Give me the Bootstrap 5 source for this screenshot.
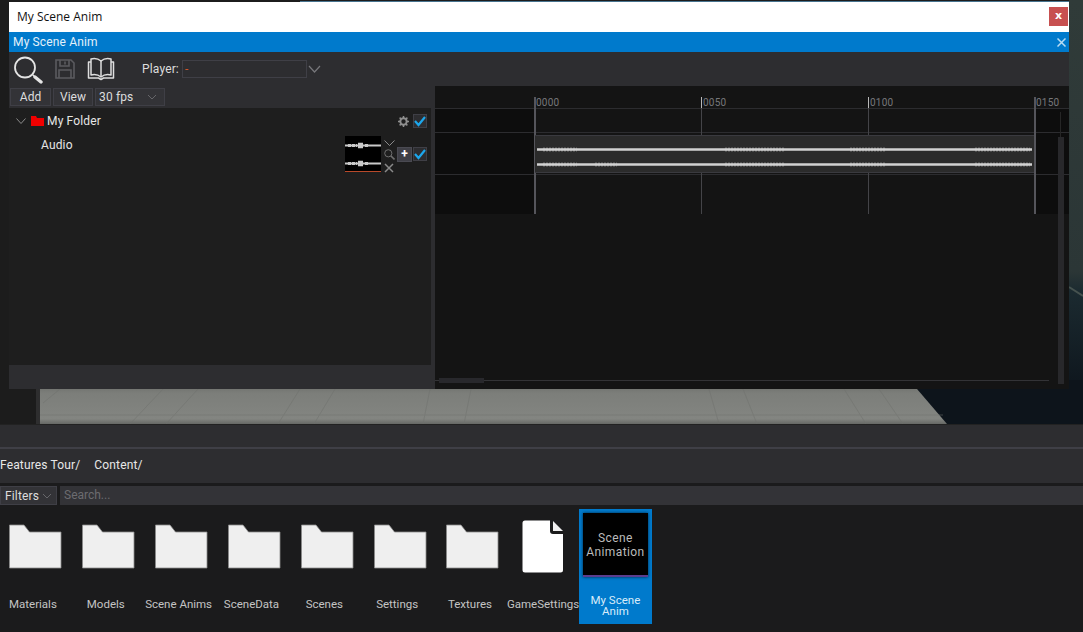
<!DOCTYPE html>
<html lang="en">

<head>
    <meta charset="UTF-8">
    <meta name="viewport" content="width=device-width, initial-scale=1.0">
    <title>My Scene Anim</title>
    <link rel="stylesheet" href="https://cdn.jsdelivr.net/npm/bootstrap@5.3.0/dist/css/bootstrap.min.css">
    <style>
        html, body { height: 632px; overflow: hidden; }
        body { background: #1b1b1c; color: #e6e6e6; font: 12px/14px Roboto, "Liberation Sans", sans-serif; letter-spacing: .15px; width: 1083px; }
        svg { display: block; flex: none; }

        .stage { height: 424px; position: relative; background: #1c1c1c; }
        .stage-bg { position: absolute; inset: 0; }

        .editor-win { position: absolute; left: 9px; top: 2px; width: 1060px; height: 387px; background: #2d2d30; }
        .win-title { height: 30px; background: #fff; color: #111; font-family: "Open Sans", "Liberation Sans", sans-serif; letter-spacing: 0; padding: 0 1px 0 8px; }
        .win-close { width: 19px; height: 19px; margin-top: -2px; background: #c75050; color: #fff; font: bold 11px/17px "DejaVu Sans", sans-serif; text-align: center; }
        .win-tab { height: 20px; background: #007acc; padding: 0 3px 0 4px; color: #e4f1fa; }

        .tool-row { height: 34px; padding-left: 4px; }
        .player-lbl { margin: 0 3px 0 27px; color: #ddd; }
        .player-box { width: 125px; height: 18px; flex: none; border: 1px solid #3f3f46; background: #2d2d30; color: #d0562a; padding: 0 2px; line-height: 16px; }

        .editor-body { height: 303px; }
        .left-col { width: 426px; background: #2d2d30; }
        .btn-row { height: 22px; padding: 2px 0 0 1px; gap: 2px; }
        .ed-btn { height: 18px; background: #333337; border: 1px solid #3f3f46; color: #ddd; font-size: 12px; line-height: 16px; padding: 0; border-radius: 0; text-align: center; }
        .ed-btn:hover { background: #333337; color: #ddd; border-color: #3f3f46; }
        .fps-sel { width: 70px; padding: 0 7px 0 3px; }

        .tree { width: 422px; height: 257px; background: #1e1e1e; }
        .tree-row { height: 26px; padding: 0 4px 0 7px; }
        .chk { width: 14px; height: 14px; background: #2d2d30; border: 1px solid #3f3f46; }
        .plus-btn { width: 15px; height: 15px; background: #3f3f46; border: 1px solid #4a4a52; color: #fff; font: bold 12px/12px Roboto, sans-serif; text-align: center; margin-right: 1px; }
        .thumb-mini { width: 36px; height: 36px; background: #000; border-bottom: 1px solid #b8492a; }
        .mini-tools { width: 12px; margin-left: 3px; gap: 3px; padding-top: 4px; }

        .timeline { width: 634px; position: relative; background: #141414; overflow: hidden; }
        .tl-side-l { position: absolute; left: 0; top: 22px; width: 99px; height: 106px; background: #0d0d0d; }
        .tl-side-r { position: absolute; left: 600px; top: 22px; width: 34px; height: 106px; background: #0d0d0d; }
        .tl-hline { position: absolute; left: 0; right: 0; height: 1px; background: #2c2c2f; }
        .tick { position: absolute; top: 11px; width: 1px; height: 117px; background: #444448; }
        .tick::before { content: ""; position: absolute; left: 0; top: 0; width: 1px; height: 11px; background: #b9b9b9; }
        .tick-edge { width: 2px; background: #55555b; }
        .tick-edge::before { display: none; }
        .tick-lbl { position: absolute; top: 0; left: 2px; font-size: 10px; line-height: 11px; color: #77777b; letter-spacing: .2px; }
        .clip { position: absolute; left: 100px; top: 49px; width: 499px; height: 38px; background: #2b2b2b; border-top: 1px solid #3a3a3f; border-bottom: 1px solid #3a3a3f; }
        .vscroll { position: absolute; left: 623px; top: 51px; width: 6px; height: 247px; background: #28282b; }
        .vscroll-line { position: absolute; left: 625px; top: 26px; width: 1px; height: 25px; background: #262626; }
        .hscroll { position: absolute; left: 0; top: 294px; width: 614px; height: 1px; background: #333336; }
        .hscroll-thumb { position: absolute; left: 4px; top: 292px; width: 45px; height: 5px; background: #28282c; }

        .dock-top { height: 23px; background: #2d2d30; border-top: 1px solid #222; }
        .dock-line { height: 2px; background: #3f3f46; }
        .crumbs { height: 34px; padding-bottom: 2px; background: #2d2d30; gap: 14px; color: #e8e8e8; }
        .filter-row { height: 22px; padding-top: 3px; background: #1b1b1c; gap: 3px; }
        .filter-btn { width: 57px; height: 19px; flex: none; background: #333337; border: 1px solid #3f3f46; padding: 0 4px; color: #ddd; line-height: 16px; }
        .search-box { height: 19px; min-height: 0; background: #333337; border: 0; border-radius: 0; padding: 0 4px; font-size: 12px; line-height: 19px; color: #ddd; }
        .search-box::placeholder { color: #6c6c70; }
        .search-box:focus { background: #333337; box-shadow: none; color: #ddd; }

        .assets { padding: 4px 0 0 0; margin-left: -1px; letter-spacing: 0; }
        .asset { width: 72.85px; height: 115px; flex: none; text-align: center; color: #c4c4c4; }
        .asset-icon { height: 72px; padding-top: 15px; }
        .asset-name { margin-top: 18px; font-size: 11.5px; line-height: 10px; white-space: nowrap; margin-left: -5px; }
        .asset-doc { width: 70px; }
        .asset-doc .asset-icon { padding: 11px 2px 0 0; }
        .asset-doc .asset-name { margin-left: -2px; }
        .asset-sel { width: 73px; background: #007acc; color: #d8ecfa; }
        .asset-sel .asset-name { margin: 18px 0 0; line-height: 11px; white-space: normal; padding: 0 8px; }
        .anim-thumb { width: 65px; height: 64px; margin: 4px auto 0; background: #000; border-bottom: 2px solid #5b3d8f; box-shadow: 0 0 3px rgba(0,0,0,.7); color: #bbb; font-size: 12px; line-height: 14px; letter-spacing: .4px; padding-top: 18px; }
    </style>
</head>

<body>
    <div class="stage">
        <svg class="stage-bg" width="1083" height="424" viewBox="0 0 1083 424">
            <defs>
                <linearGradient id="floorShade" x1="0" y1="0" x2="0" y2="1">
                    <stop offset="0" stop-color="#747672"/>
                    <stop offset=".12" stop-color="#7c7e7a"/>
                    <stop offset=".85" stop-color="#838581"/>
                    <stop offset="1" stop-color="#666865"/>
                </linearGradient>
                <linearGradient id="skyShade" x1="0" y1="0" x2="0" y2="1">
                    <stop offset="0" stop-color="#303b39"/>
                    <stop offset=".68" stop-color="#2b3636"/>
                    <stop offset=".73" stop-color="#1b2a30"/>
                    <stop offset="1" stop-color="#0d141b"/>
                </linearGradient>
            </defs>
            <rect width="1083" height="424" fill="#1c1c1c"/>
            <rect x="300" y="1" width="783" height="1" fill="#47748f"/>
            <rect x="1069" width="14" height="400" fill="url(#skyShade)"/>
            <path d="M1069 287 1083 296" stroke="#46524f" stroke-width="2"/>
            <rect x="600" y="380" width="483" height="44" fill="#0d141b"/>
            <rect x="36" y="389" width="4" height="35" fill="#2e2e2f"/>
            <polygon points="40,389 917,389 947,424 40,424" fill="url(#floorShade)"/>
            <g stroke="#70726e" stroke-width="1" fill="none" opacity=".5">
                <path d="M40 415H943"/>
                <path d="M60 389 43 403M163 389 130 424M198 389 166 424M300 389 278 424M335 389 314 424M430 389 423 424M471 389 464 424"/>
                <path d="M709 389 719 424M743 389 757 424M844 389 866 424M879 389 903 424"/>
            </g>
        </svg>

        <div class="editor-win">
            <div class="win-title d-flex align-items-center justify-content-between">
                <span>My Scene Anim</span>
                <div class="win-close">x</div>
            </div>
            <div class="win-tab d-flex align-items-center justify-content-between">
                <span>My Scene Anim</span>
                <svg width="9" height="9" viewBox="0 0 9 9"><path d="M.5 .5 8.500 8.500M8.500 .5 .5 8.500" stroke="#b8dcf3" stroke-width="1.500"/></svg>
            </div>
            <div class="tool-row d-flex align-items-center">
                <svg width="31" height="30" viewBox="0 0 31 30" fill="none" stroke="#e4e4e4">
                    <circle cx="12" cy="13.500" r="10" stroke-width="1.800"/>
                    <path d="M19.500 20.500 22 23" stroke-width="1.500"/>
                    <path d="M22 23 28 28" stroke-width="3.400" stroke-linecap="round"/>
                </svg>
                <svg style="margin-left:10px" width="22" height="22" viewBox="0 0 22 22" fill="none" stroke="#5b5b5f" stroke-width="1.600">
                    <path d="M2 2H17L20 5V20H2Z"/>
                    <path d="M6 2V8H15V2M5 20V12H17V20M11 3.500V6.500"/>
                </svg>
                <svg style="margin-left:11px" width="28" height="24" viewBox="0 0 28 24" fill="none" stroke="#dedede" stroke-width="1.500" stroke-linejoin="round">
                    <path d="M14 4C11 1.500 7 1.200 4 2V18C7 17.200 11 17.500 14 20C17 17.500 21 17.200 24 18V2C21 1.200 17 1.500 14 4Z"/>
                    <path d="M14 4V20"/>
                    <path d="M4 5H1.500V21H11.500L14 22.500L16.500 21H26.500V5H24"/>
                </svg>
                <span class="player-lbl">Player:</span>
                <div class="player-box">-</div>
                <svg style="margin-left:1px" width="13" height="8" viewBox="0 0 13 8" fill="none"><path d="M1 1 6.500 7 12 1" stroke="#77777b" stroke-width="1.200"/></svg>
            </div>

            <div class="editor-body d-flex">
                <div class="left-col d-flex flex-column">
                    <div class="btn-row d-flex">
                        <button class="ed-btn btn" style="width:41px">Add</button>
                        <button class="ed-btn btn" style="width:40px">View</button>
                        <div class="ed-btn fps-sel d-flex align-items-center justify-content-between">
                            <span>30 fps</span>
                            <svg width="10" height="6" viewBox="0 0 10 6" fill="none"><path d="M1 1 5 5 9 1" stroke="#66666a"/></svg>
                        </div>
                    </div>
                    <div class="tree">
                        <div class="tree-row d-flex align-items-center">
                            <svg width="10" height="6" viewBox="0 0 10 6" fill="none"><path d="M.5.5 5 5.500 9.500.5" stroke="#8a8a8a"/></svg>
                            <svg style="margin-left:5px" width="13" height="10" viewBox="0 0 13 10"><path d="M0 0H5L6 2H13V10H0Z" fill="#f00000"/></svg>
                            <span style="margin-left:3px">My Folder</span>
                            <svg class="ms-auto" width="11" height="11" viewBox="0 0 11 11"><circle cx="5.500" cy="5.500" r="3.200" fill="none" stroke="#8f8f8f" stroke-width="2"/><path d="M5.500 0V11M0 5.500H11M1.600 1.600 9.400 9.400M9.400 1.600 1.600 9.400" stroke="#8f8f8f" stroke-width="1.500" stroke-dasharray="2 7 2"/></svg>
                            <div class="chk" style="margin-left:4px">
                                <svg width="12" height="12" viewBox="0 0 12 12" fill="none"><path d="M1 6 4.500 10 11 2" stroke="#1ca7ec" stroke-width="2.200"/></svg>
                            </div>
                        </div>
                        <div class="d-flex" style="padding:2px 4px 0 32px;height:38px">
                            <span style="margin-top:2px">Audio</span>
                            <div class="thumb-mini ms-auto">
                                <svg width="36" height="35" viewBox="0 0 36 35" fill="none" stroke="#c9c9c9">
                                    <path d="M0 9.500H36M0 27.500H36" stroke-width="2"/>
                                    <path d="M3 9.500H12M20 9.500H24M3 27.500H12M20 27.500H24" stroke-width="3" stroke-dasharray="3 1"/>
                                    <path d="M13 9.500H18M13 27.500H18" stroke-width="5.500"/>
                                </svg>
                            </div>
                            <div class="mini-tools d-flex flex-column align-items-start">
                                <svg width="11" height="6" viewBox="0 0 11 6" fill="none"><path d="M.5.5 5.500 5.500 10.500.5" stroke="#8a8a8a"/></svg>
                                <svg width="11" height="11" viewBox="0 0 11 11" fill="none" stroke="#6f6f6f"><circle cx="4.300" cy="4.300" r="3.600"/><path d="M7 7 10.500 10.500" stroke-width="1.600"/></svg>
                                <svg width="10" height="10" viewBox="0 0 10 10" fill="none"><path d="M1 1 9 9M9 1 1 9" stroke="#8a8a8a" stroke-width="1.500"/></svg>
                            </div>
                            <div class="d-flex align-items-center" style="height:36px;padding-left:1px">
                                <div class="plus-btn">+</div>
                                <div class="chk">
                                    <svg width="12" height="12" viewBox="0 0 12 12" fill="none"><path d="M1 6 4.500 10 11 2" stroke="#1ca7ec" stroke-width="2.200"/></svg>
                                </div>
                            </div>
                        </div>
                    </div>
                </div>

                <div class="timeline">
                    <div class="tl-side-l"></div>
                    <div class="tl-side-r"></div>
                    <div class="tl-hline" style="top:22px"></div>
                    <div class="tl-hline" style="top:46px"></div>
                    <div class="tl-hline" style="top:88px"></div>
                    <div class="tick tick-edge" style="left:99px"><span class="tick-lbl">0000</span></div>
                    <div class="tick" style="left:266px"><span class="tick-lbl">0050</span></div>
                    <div class="tick" style="left:433px"><span class="tick-lbl">0100</span></div>
                    <div class="tick tick-edge" style="left:599px"><span class="tick-lbl">0150</span></div>
                    <div class="clip">
                        <svg width="499" height="36" viewBox="0 0 499 36" fill="none" stroke="#d2d2d2">
                            <path d="M2 13.500H497M2 28.500H497" stroke-width="2.600"/>
                            <g stroke-width="4" opacity=".4">
                                <path d="M8 13.500H42M190 13.500H250M315 13.500H350M440 13.500H495" stroke-dasharray="2 1"/>
                                <path d="M8 28.500H42M60 28.500H82M190 28.500H250M315 28.500H350M440 28.500H495" stroke-dasharray="2 1"/>
                            </g>
                        </svg>
                    </div>
                    <div class="vscroll-line"></div>
                    <div class="vscroll"></div>
                    <div class="hscroll"></div>
                    <div class="hscroll-thumb"></div>
                </div>
            </div>
        </div>
    </div>

    <div class="dock-top"></div>
    <div class="dock-line"></div>
    <div class="crumbs d-flex align-items-center">
        <span>Features Tour/</span>
        <span>Content/</span>
    </div>
    <div class="filter-row d-flex">
        <div class="filter-btn d-flex align-items-center justify-content-between">
            <span>Filters</span>
            <svg width="10" height="6" viewBox="0 0 10 6" fill="none"><path d="M1 1 5 5 9 1" stroke="#66666a"/></svg>
        </div>
        <input class="search-box form-control flex-grow-1" placeholder="Search...">
    </div>

    <div class="assets d-flex">
        <div class="asset">
            <div class="asset-icon d-flex justify-content-center"><svg width="54" height="45" viewBox="0 0 54 45"><use href="#folderShape"/></svg></div>
            <div class="asset-name">Materials</div>
        </div>
        <div class="asset">
            <div class="asset-icon d-flex justify-content-center"><svg width="54" height="45" viewBox="0 0 54 45"><use href="#folderShape"/></svg></div>
            <div class="asset-name">Models</div>
        </div>
        <div class="asset">
            <div class="asset-icon d-flex justify-content-center"><svg width="54" height="45" viewBox="0 0 54 45"><use href="#folderShape"/></svg></div>
            <div class="asset-name">Scene Anims</div>
        </div>
        <div class="asset">
            <div class="asset-icon d-flex justify-content-center"><svg width="54" height="45" viewBox="0 0 54 45"><use href="#folderShape"/></svg></div>
            <div class="asset-name">SceneData</div>
        </div>
        <div class="asset">
            <div class="asset-icon d-flex justify-content-center"><svg width="54" height="45" viewBox="0 0 54 45"><use href="#folderShape"/></svg></div>
            <div class="asset-name">Scenes</div>
        </div>
        <div class="asset">
            <div class="asset-icon d-flex justify-content-center"><svg width="54" height="45" viewBox="0 0 54 45"><use href="#folderShape"/></svg></div>
            <div class="asset-name">Settings</div>
        </div>
        <div class="asset">
            <div class="asset-icon d-flex justify-content-center"><svg width="54" height="45" viewBox="0 0 54 45"><use href="#folderShape"/></svg></div>
            <div class="asset-name">Textures</div>
        </div>
        <div class="asset asset-doc">
            <div class="asset-icon d-flex justify-content-center">
                <svg width="42" height="53" viewBox="0 0 42 53">
                    <path d="M3 .5H28V11Q28 14 31 14H41V50Q41 52.500 38.500 52.500H3Q.5 52.500 .5 50V3Q.5 .5 3 .5Z" fill="#fff"/>
                    <path d="M31 1 41 11H31Z" fill="#f0f0f0"/>
                </svg>
            </div>
            <div class="asset-name">GameSettings</div>
        </div>
        <div class="asset asset-sel">
            <div class="anim-thumb">Scene<br>Animation</div>
            <div class="asset-name">My Scene Anim</div>
        </div>
    </div>

    <svg width="0" height="0" class="position-absolute">
        <defs>
            <g id="folderShape">
                <path d="M1.500 1H16L21.500 8H53V44H1.500Z" fill="#efefef" stroke="#8a8a8a" stroke-width=".8"/>
            </g>
        </defs>
    </svg>

    <script src="https://cdn.jsdelivr.net/npm/bootstrap@5.3.0/dist/js/bootstrap.bundle.min.js"></script>
</body>

</html>
